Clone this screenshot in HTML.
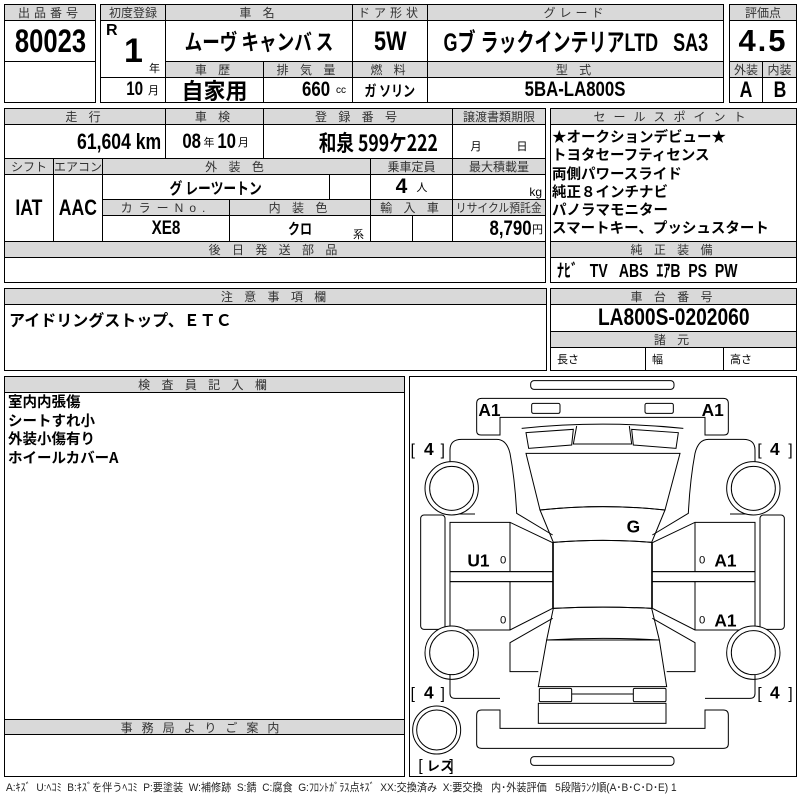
<!DOCTYPE html>
<html><head><meta charset="utf-8"><style>
*{margin:0;padding:0;box-sizing:border-box}
body{width:800px;height:800px;background:#fff;position:relative;overflow:hidden;font-family:"Liberation Sans","Noto Sans CJK JP",sans-serif}
.c{position:absolute;border:1px solid #000;display:flex;align-items:center;justify-content:center;white-space:nowrap}
.h{background:#d9d9d9;font-size:12px;color:#333;letter-spacing:4px;font-family:"Liberation Sans","Noto Sans CJK JP",sans-serif}
.v{font-weight:bold;color:#000}
.t{position:absolute;white-space:nowrap}
.n{display:inline-block;transform:scaleX(.8)}
.nr{display:inline-block;transform:scaleX(.8);transform-origin:right center}
</style></head><body>
<!-- box1 -->
<div class="c h" style="left:4px;top:4px;width:92px;height:17px">出品番号</div>
<div class="c v" style="left:4px;top:20px;width:92px;height:42px;font-size:32px"><span class="n">80023</span></div>
<div class="c" style="left:4px;top:61px;width:92px;height:42px"></div>
<!-- box2 -->
<div class="c h" style="left:100px;top:4px;width:66px;height:17px;letter-spacing:0">初度登録</div>
<div class="c h" style="left:165px;top:4px;width:188px;height:17px">車 名</div>
<div class="c h" style="left:352px;top:4px;width:76px;height:17px">ドア形状</div>
<div class="c h" style="left:427px;top:4px;width:297px;height:17px">グレード</div>
<div class="c v" style="left:100px;top:20px;width:66px;height:58px"></div>
<div class="t v" style="left:106px;top:22px;font-size:16px">R</div>
<div class="t v" style="left:124px;top:32px;font-size:34px">1</div>
<div class="t" style="left:149px;top:60px;font-size:11px">年</div>
<div class="c v" style="left:100px;top:77px;width:66px;height:26px;font-size:19px;justify-content:flex-end;padding-right:6px"><span class="nr">10</span>&nbsp;<span style="font-size:11px;font-weight:normal">月</span></div>
<div class="c v" style="left:165px;top:20px;width:188px;height:42px;font-size:22px;font-family:'Noto Sans CJK JP',sans-serif"><span class="n">ムーヴ キャンバ ス</span></div>
<div class="c v" style="left:352px;top:20px;width:76px;height:42px;font-size:27px"><span class="n">5W</span></div>
<div class="c v" style="left:427px;top:20px;width:297px;height:42px;font-size:25px;font-family:'Liberation Sans','Noto Sans CJK JP',sans-serif"><span style="display:inline-block;transform:scaleX(.72)">Gブ ラックインテリアLTD&nbsp;&nbsp; SA3</span></div>
<div class="c h" style="left:165px;top:61px;width:99px;height:17px">車 歴</div>
<div class="c h" style="left:263px;top:61px;width:90px;height:17px">排 気 量</div>
<div class="c h" style="left:352px;top:61px;width:76px;height:17px">燃 料</div>
<div class="c h" style="left:427px;top:61px;width:297px;height:17px">型 式</div>
<div class="c v" style="left:165px;top:77px;width:99px;height:26px;font-size:22px;font-family:'Noto Sans CJK JP',sans-serif">自家用</div>
<div class="c v" style="left:263px;top:77px;width:90px;height:26px;font-size:21px;justify-content:flex-end;padding-right:6px"><span class="nr">660</span>&nbsp;<span style="font-size:10px;font-weight:normal">cc</span></div>
<div class="c v" style="left:352px;top:77px;width:76px;height:26px;font-size:15px;font-family:'Noto Sans CJK JP',sans-serif"><span class="n">ガ ソリン</span></div>
<div class="c v" style="left:427px;top:77px;width:297px;height:26px;font-size:21px"><span class="n">5BA-LA800S</span></div>
<!-- box3 -->
<div class="c h" style="left:729px;top:4px;width:68px;height:17px;letter-spacing:0">評価点</div>
<div class="c v" style="left:729px;top:20px;width:68px;height:42px;font-size:31px;letter-spacing:2px">4.5</div>
<div class="c h" style="left:729px;top:61px;width:34px;height:17px;letter-spacing:0">外装</div>
<div class="c h" style="left:762px;top:61px;width:35px;height:17px;letter-spacing:0">内装</div>
<div class="c v" style="left:729px;top:77px;width:34px;height:26px;font-size:22px"><span class="n">A</span></div>
<div class="c v" style="left:762px;top:77px;width:35px;height:26px;font-size:22px"><span class="n">B</span></div>
<!-- box4 -->
<div class="c h" style="left:4px;top:108px;width:162px;height:17px">走 行</div>
<div class="c h" style="left:165px;top:108px;width:99px;height:17px">車 検</div>
<div class="c h" style="left:263px;top:108px;width:190px;height:17px">登 録 番 号</div>
<div class="c h" style="left:452px;top:108px;width:94px;height:17px;letter-spacing:0">譲渡書類期限</div>
<div class="c v" style="left:4px;top:124px;width:162px;height:35px;font-size:22px;justify-content:flex-end;padding-right:4px"><span class="nr">61,604 km</span></div>
<div class="c v" style="left:165px;top:124px;width:99px;height:35px;font-size:21px"><span class="n">08</span><span style="font-size:11px;font-weight:normal">年</span><span class="n">10</span><span style="font-size:11px;font-weight:normal">月</span></div>
<div class="c v" style="left:263px;top:124px;width:190px;height:35px;font-size:22px;font-family:'Noto Sans CJK JP',sans-serif;justify-content:flex-end;padding-right:14px"><span class="nr">和泉 599ケ222</span></div>
<div class="c" style="left:452px;top:124px;width:94px;height:35px;font-size:11px;align-items:flex-end;padding-bottom:4px;justify-content:space-around">月<span>日</span></div>
<div class="c h" style="left:4px;top:158px;width:50px;height:17px;letter-spacing:0">シフト</div>
<div class="c h" style="left:53px;top:158px;width:50px;height:17px;letter-spacing:0">エアコン</div>
<div class="c h" style="left:102px;top:158px;width:269px;height:17px">外 装 色</div>
<div class="c h" style="left:370px;top:158px;width:83px;height:17px;letter-spacing:0">乗車定員</div>
<div class="c h" style="left:452px;top:158px;width:94px;height:17px;letter-spacing:0">最大積載量</div>
<div class="c v" style="left:4px;top:174px;width:50px;height:68px;font-size:22px"><span class="n">IAT</span></div>
<div class="c v" style="left:53px;top:174px;width:50px;height:68px;font-size:22px"><span class="n">AAC</span></div>
<div class="c v" style="left:102px;top:174px;width:228px;height:26px;font-size:16px;font-family:'Noto Sans CJK JP',sans-serif"><span class="n">グ レーツートン</span></div>
<div class="c" style="left:329px;top:174px;width:42px;height:26px"></div>
<div class="c v" style="left:370px;top:174px;width:83px;height:26px;font-size:21px">4<span style="font-size:11px;font-weight:normal">&nbsp;&nbsp;&nbsp;人</span></div>
<div class="c" style="left:452px;top:174px;width:94px;height:26px;font-size:12px;justify-content:flex-end;padding-right:3px;align-items:flex-end">kg</div>
<div class="c h" style="left:102px;top:199px;width:128px;height:17px;letter-spacing:6px">カラーNo.</div>
<div class="c h" style="left:229px;top:199px;width:142px;height:17px">内 装 色</div>
<div class="c h" style="left:370px;top:199px;width:83px;height:17px">輸 入 車</div>
<div class="c h" style="left:452px;top:199px;width:94px;height:17px;letter-spacing:0"><span style="display:inline-block;transform:scaleX(.9)">リサイクル預託金</span></div>
<div class="c v" style="left:102px;top:215px;width:128px;height:27px;font-size:19px"><span class="n">XE8</span></div>
<div class="c v" style="left:229px;top:215px;width:142px;height:27px;font-size:15px;font-family:'Noto Sans CJK JP',sans-serif"><span class="n">クロ</span></div>
<div class="t" style="left:353px;top:226px;font-size:11px">系</div>
<div class="c" style="left:370px;top:215px;width:43px;height:27px"></div>
<div class="c" style="left:412px;top:215px;width:41px;height:27px"></div>
<div class="c v" style="left:452px;top:215px;width:94px;height:27px;font-size:21px;justify-content:flex-end;padding-right:2px"><span class="nr">8,790</span><span style="font-size:11px;font-weight:normal">円</span></div>
<div class="c h" style="left:4px;top:241px;width:542px;height:17px">後 日 発 送 部 品</div>
<div class="c" style="left:4px;top:257px;width:542px;height:26px"></div>
<!-- box5 -->
<div class="c h" style="left:550px;top:108px;width:247px;height:17px;letter-spacing:8px">セールスポイント</div>
<div class="c" style="left:550px;top:124px;width:247px;height:118px"></div>
<div class="t v" style="left:552px;top:128px;font-size:14.5px;line-height:18.3px;font-family:'Noto Sans CJK JP',sans-serif">★オークションデビュー★<br>トヨタセーフティセンス<br>両側パワースライド<br>純正８インチナビ<br>パノラマモニター<br>スマートキー、プッシュスタート</div>
<div class="c h" style="left:550px;top:241px;width:247px;height:17px">純 正 装 備</div>
<div class="c v" style="left:550px;top:257px;width:247px;height:26px;font-size:18px;justify-content:flex-start;padding-left:6px;font-family:'Liberation Sans','Noto Sans CJK JP',sans-serif"><span style="display:inline-block;transform:scaleX(.78);transform-origin:left center">ﾅﾋﾞ&nbsp;&nbsp; TV&nbsp;&nbsp; ABS&nbsp; ｴｱB&nbsp; PS&nbsp; PW</span></div>
<!-- box6 -->
<div class="c h" style="left:4px;top:288px;width:543px;height:17px">注 意 事 項 欄</div>
<div class="c" style="left:4px;top:304px;width:543px;height:67px"></div>
<div class="t v" style="left:9px;top:307px;font-size:16px;font-family:'Noto Sans CJK JP',sans-serif">アイドリングストップ、ＥＴＣ</div>
<div class="c h" style="left:550px;top:288px;width:247px;height:17px">車 台 番 号</div>
<div class="c v" style="left:550px;top:304px;width:247px;height:28px;font-size:24px"><span class="n">LA800S-0202060</span></div>
<div class="c h" style="left:550px;top:331px;width:247px;height:17px">諸 元</div>
<div class="c" style="left:550px;top:347px;width:96px;height:24px;font-size:11px;justify-content:flex-start;padding-left:6px">長さ</div>
<div class="c" style="left:645px;top:347px;width:79px;height:24px;font-size:11px;justify-content:flex-start;padding-left:6px">幅</div>
<div class="c" style="left:723px;top:347px;width:74px;height:24px;font-size:11px;justify-content:flex-start;padding-left:6px">高さ</div>
<!-- box7 -->
<div class="c h" style="left:4px;top:376px;width:401px;height:17px">検 査 員 記 入 欄</div>
<div class="c" style="left:4px;top:392px;width:401px;height:328px"></div>
<div class="t v" style="left:8px;top:393px;font-size:14.5px;line-height:18.5px;font-family:'Noto Sans CJK JP',sans-serif">室内内張傷<br>シートすれ小<br>外装小傷有り<br>ホイールカバーA</div>
<div class="c h" style="left:4px;top:719px;width:401px;height:16px;letter-spacing:9px">事務局よりご案内</div>
<div class="c" style="left:4px;top:734px;width:401px;height:43px"></div>
<!-- diagram -->
<div class="c" style="left:409px;top:376px;width:388px;height:401px"></div>
<svg style="position:absolute;left:400px;top:370px" width="400" height="430" viewBox="0 0 1200 1290" fill="none" stroke="#000" stroke-width="3">
<rect x="392" y="32" width="430" height="26" rx="10"/>
<path d="M245 85H970Q985 85 985 100V183Q985 195 972 195H915V142H300V195H243Q230 195 230 183V100Q230 85 245 85Z"/>
<rect x="395" y="100" width="85" height="30" rx="5"/>
<rect x="735" y="100" width="85" height="30" rx="5"/>
<path d="M365 175Q610 150 850 175"/>
<path d="M378 188L520 178L515 225L386 235Z"/>
<path d="M695 178L835 188L828 235L700 225Z"/>
<path d="M530 168L520 222H695L688 168"/>
<path d="M378 250L840 250L795 420Q610 400 420 420Z"/>
<path d="M420 420Q610 400 795 420L755 517Q610 505 460 517Z"/>
<path d="M460 517Q610 505 755 517V715Q610 708 460 715Z"/>
<path d="M460 715Q610 708 755 715L778 810Q610 800 440 810Z"/>
<path d="M440 810L778 810L800 950H415Z"/>
<rect x="418" y="955" width="97" height="40" rx="4"/>
<rect x="700" y="955" width="98" height="40" rx="4"/>
<path d="M515 972H700"/>
<rect x="415" y="1000" width="383" height="60"/>
<path d="M245 1020H300V1075H915V1020H970Q985 1020 985 1035V1122Q985 1135 970 1135H245Q230 1135 230 1122V1035Q230 1020 245 1020Z"/>
<rect x="392" y="1160" width="430" height="26" rx="10"/>
<g id="L">
<path d="M458 495L350 430Q345 330 330 250Q320 208 290 208H185Q150 208 150 240V283"/>
<path d="M150 428V432H225"/>
<path d="M150 457H330L458 518V605H150Z"/><path d="M330 457V605"/>
<path d="M150 605H458V635H150Z"/>
<path d="M150 635H458V715L330 780H150Z"/><path d="M330 635V780"/>
<rect x="62" y="435" width="73" height="343" rx="10"/>
<circle cx="155" cy="355" r="80" fill="#fff"/><circle cx="155" cy="355" r="66"/>
<circle cx="155" cy="848" r="80" fill="#fff"/><circle cx="155" cy="848" r="66"/>
<path d="M458 745L330 818V905L415 905"/>
<path d="M150 915V970Q150 985 165 985H300"/>
</g>
<use href="#L" transform="translate(1215,0) scale(-1,1)"/>
<circle cx="110" cy="1080" r="72"/><circle cx="110" cy="1080" r="60"/>
<g stroke="none" fill="#000" font-family="Liberation Sans, sans-serif" font-weight="bold" font-size="52">
<text x="235" y="138">A1</text><text x="905" y="138">A1</text>
<text x="680" y="488">G</text>
<text x="202" y="590">U1</text>
<text x="943" y="590">A1</text><text x="943" y="770">A1</text>
<text x="300" y="580" font-size="34" font-weight="normal">0</text>
<text x="300" y="760" font-size="34" font-weight="normal">0</text>
<text x="897" y="580" font-size="34" font-weight="normal">0</text>
<text x="897" y="760" font-size="34" font-weight="normal">0</text>
<text x="32" y="255" font-size="46" font-weight="normal">[</text><text x="72" y="255">4</text><text x="122" y="255" font-size="46" font-weight="normal">]</text>
<text x="1072" y="255" font-size="46" font-weight="normal">[</text><text x="1110" y="255">4</text><text x="1165" y="255" font-size="46" font-weight="normal">]</text>
<text x="32" y="985" font-size="46" font-weight="normal">[</text><text x="72" y="985">4</text><text x="122" y="985" font-size="46" font-weight="normal">]</text>
<text x="1072" y="985" font-size="46" font-weight="normal">[</text><text x="1110" y="985">4</text><text x="1165" y="985" font-size="46" font-weight="normal">]</text>
<text x="55" y="1202" font-size="46" font-weight="normal">[</text><text x="80" y="1202" font-size="40" font-family="Noto Sans CJK JP, sans-serif">レス</text><text x="148" y="1202" font-size="46" font-weight="normal">]</text>
</g>
</svg>
<div class="t" style="left:6px;top:779px;font-size:11px;color:#222;transform:scaleX(.92);transform-origin:left top;font-family:'Liberation Sans','Noto Sans CJK JP',sans-serif">A:ｷｽﾞ&nbsp; U:ﾍｺﾐ&nbsp; B:ｷｽﾞを伴うﾍｺﾐ&nbsp; P:要塗装&nbsp; W:補修跡&nbsp; S:錆&nbsp; C:腐食&nbsp; G:ﾌﾛﾝﾄｶﾞﾗｽ点ｷｽﾞ&nbsp; XX:交換済み&nbsp; X:要交換&nbsp;&nbsp; 内･外装評価&nbsp;&nbsp; 5段階ﾗﾝｸ順(A･B･C･D･E) 1</div>
</body></html>
